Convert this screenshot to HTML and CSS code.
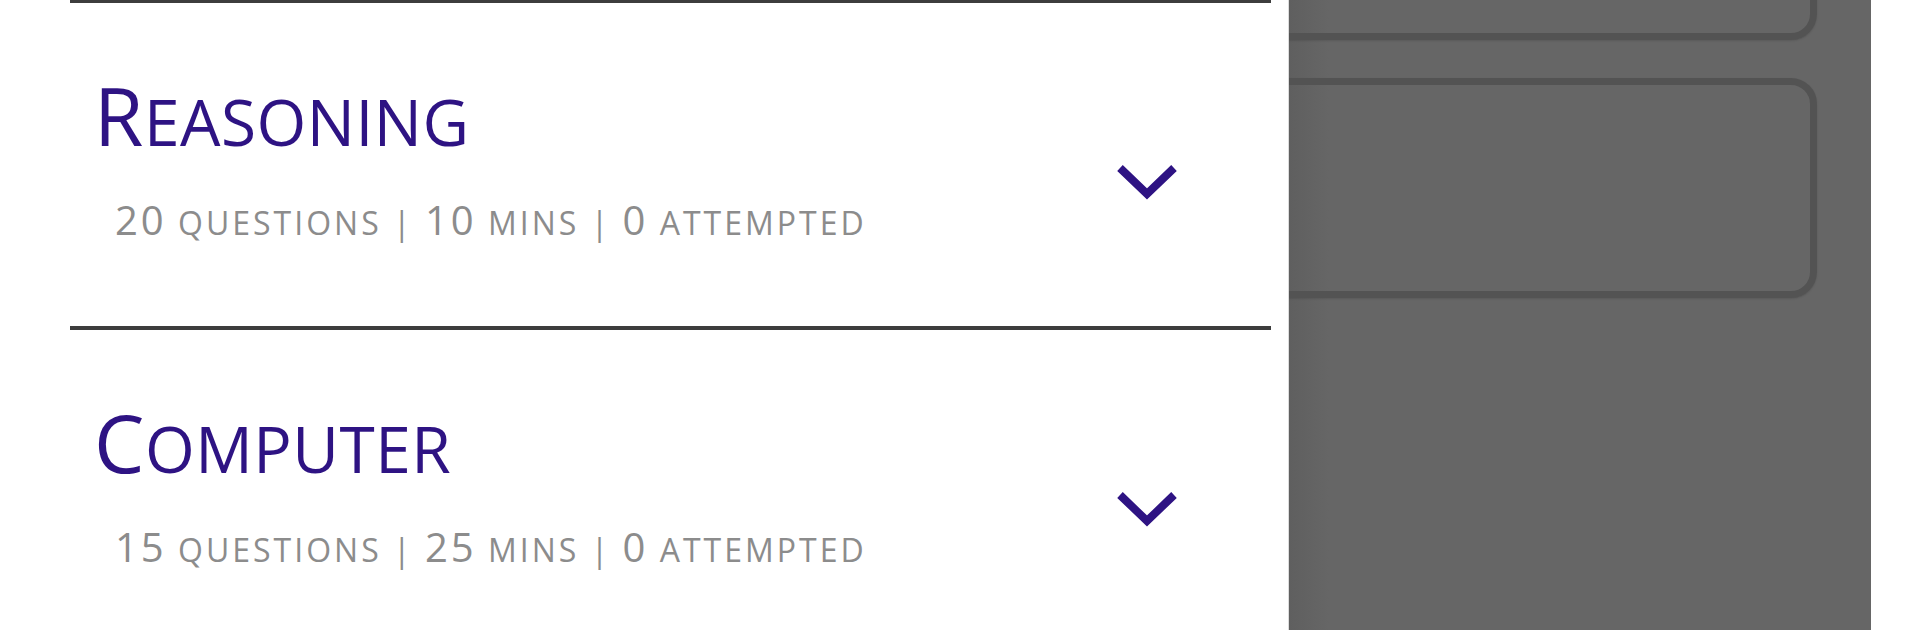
FILE: index.html
```html
<!DOCTYPE html>
<html lang="en">
<head>
<meta charset="UTF-8">
<meta name="viewport" content="width=device-width, initial-scale=1.0">
<link rel="stylesheet" href="styles.css">
</head>
<body>

<div class="page">
  <div class="topics">
    <div class="topic">
      <div class="topic-info">
        <div class="topic-title">Reasoning</div>
        <div class="topic-meta"><span class="num">20</span> questions | <span class="num">10</span> mins | <span class="num">0</span> attempted</div>
      </div>
      <svg class="chevron" viewBox="0 0 60 36"><polyline points="3,4 30,30 57,4" /></svg>
    </div>
    <div class="topic">
      <div class="topic-info">
        <div class="topic-title">Computer</div>
        <div class="topic-meta"><span class="num">15</span> questions | <span class="num">25</span> mins | <span class="num">0</span> attempted</div>
      </div>
      <svg class="chevron" viewBox="0 0 60 36"><polyline points="3,4 30,30 57,4" /></svg>
    </div>
  </div>
  <div class="overlay">
    <div class="card card-top"></div>
    <div class="card card-main"></div>
  </div>
</div>

</body>
</html>
```

FILE: styles.css
```css
body {
  margin: 0;
  font-family: "Open Sans", sans-serif;
  background: #fff;
  overflow: hidden;
}
.page {
  display: flex;
  height: 630px;
}
.topics {
  width: 1201px;
  margin-left: 70px;
  margin-top: -1px;
  flex-shrink: 0;
}
.topic {
  display: flex;
  justify-content: space-between;
  height: 327px;
  box-sizing: border-box;
  border-top: 4px solid #3d3d3d;
  padding: 72px 94px 0 24px;
}
.topic-title {
  font-size: 64px;
  line-height: 80px;
  letter-spacing: 0.5px;
  text-transform: uppercase;
  color: #2e1383;
}
.topic-title::first-letter {
  font-size: 80px;
}
.topic-meta {
  margin: 38px 0 0 21px;
  font-size: 32px;
  line-height: 40px;
  letter-spacing: 3px;
  text-transform: uppercase;
  color: #8c8c8c;
}
.num {
  font-size: 40px;
}
.chevron {
  width: 60px;
  height: 36px;
  margin-top: 89px;
  flex-shrink: 0;
}
.chevron polyline {
  fill: none;
  stroke: #2e1383;
  stroke-width: 8;
}
.overlay {
  width: 583px;
  margin-left: 17px;
  box-sizing: border-box;
  border-left: 1px solid #dcdcdc;
  padding-right: 54px;
  background: #666 linear-gradient(to right, #5f5f5f, #666 40px);
  overflow: hidden;
  display: flex;
  flex-direction: column;
  gap: 38px;
}
.card {
  flex-shrink: 0;
  box-sizing: border-box;
  margin-left: -40px;
  border: 7px solid #535353;
  border-radius: 26px;
  box-shadow: 0 1px 2px rgba(0, 0, 0, 0.12);
}
.card-top {
  height: 140px;
  margin-top: -100px;
}
.card-main {
  height: 220px;
}
```
